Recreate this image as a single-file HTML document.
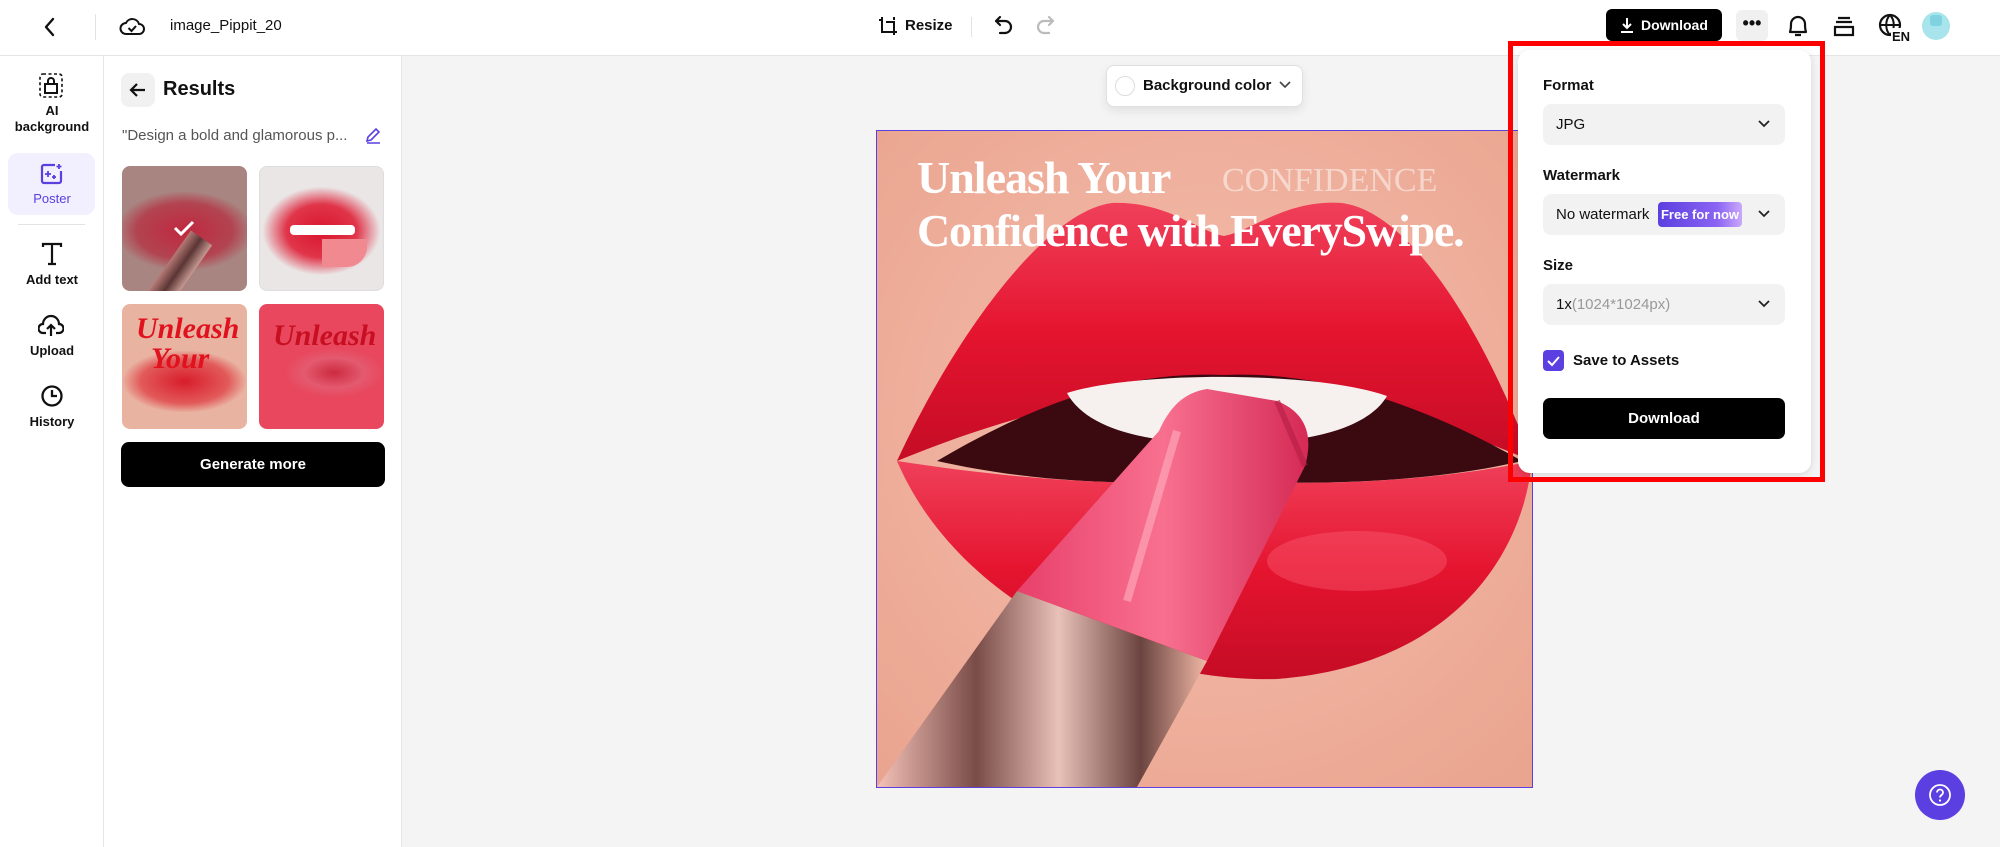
<!DOCTYPE html>
<html><head><meta charset="utf-8"><style>
*{box-sizing:border-box;margin:0;padding:0}
body{width:2000px;height:847px;overflow:hidden;background:#f4f4f4;font-family:"Liberation Sans",sans-serif;color:#111;position:relative}
.abs{position:absolute}
.top{left:0;top:0;width:2000px;height:56px;background:#fff;border-bottom:1px solid #e6e6e6}
.side{left:0;top:56px;width:104px;height:791px;background:#fff;border-right:1px solid #e6e6e6}
.panel{left:104px;top:56px;width:298px;height:791px;background:#fff;border-right:1px solid #e6e6e6}
.lbl{font-size:13px;font-weight:bold;text-align:center;width:104px;left:0;line-height:16px}
.thumb{border-radius:8px;overflow:hidden;width:125px;height:125px}
.field{left:1543px;width:242px;height:41px;background:#f2f2f2;border-radius:8px;font-size:15px;line-height:41px;padding-left:13px}
.flab{left:1543px;font-size:15px;font-weight:bold}
.chev{position:absolute;right:14px;top:14px}
</style></head><body>
<div class="abs top"></div>
<svg class="abs" style="left:40px;top:16px" width="20" height="22" viewBox="0 0 20 22"><path d="M13 3 L6 11 L13 19" fill="none" stroke="#111" stroke-width="2.4" stroke-linecap="round" stroke-linejoin="round"/></svg>
<div class="abs" style="left:95px;top:14px;width:1px;height:26px;background:#e3e3e3"></div>
<svg class="abs" style="left:119px;top:15px" width="26" height="22" viewBox="0 0 26 22"><path d="M7 19 H20 A5 5 0 0 0 20 9 A7 7 0 0 0 7 8 A5.5 5.5 0 0 0 7 19Z" fill="none" stroke="#111" stroke-width="2"/><path d="M9.5 13 L12.5 16 L17 11" fill="none" stroke="#111" stroke-width="2"/></svg>
<div class="abs" style="left:170px;top:17px;font-size:15px">image_Pippit_20</div>
<svg class="abs" style="left:877px;top:15px" width="22" height="22" viewBox="0 0 22 22"><path d="M5 2v3H2M5 5v12h12M17 20v-3h3M17 17V7H9" fill="none" stroke="#111" stroke-width="2"/><path d="M17 5V2" stroke="#111" stroke-width="2"/></svg>
<div class="abs" style="left:905px;top:17px;font-size:15px;font-weight:bold">Resize</div>
<div class="abs" style="left:971px;top:17px;width:1px;height:20px;background:#e3e3e3"></div>
<svg class="abs" style="left:993px;top:14px" width="22" height="24" viewBox="0 0 22 24"><path d="M7 3 L3 7 L7 11 M3 7 H12 A6 6 0 0 1 12 19 H7" fill="none" stroke="#111" stroke-width="2.2" stroke-linecap="round" stroke-linejoin="round"/></svg>
<svg class="abs" style="left:1034px;top:14px" width="22" height="24" viewBox="0 0 22 24"><path d="M15 3 L19 7 L15 11 M19 7 H10 A6 6 0 0 0 10 19 H15" fill="none" stroke="#bbb" stroke-width="2.2" stroke-linecap="round" stroke-linejoin="round"/></svg>
<div class="abs" style="left:1606px;top:9px;width:116px;height:32px;background:#000;border-radius:6px;color:#fff;font-size:14px;font-weight:bold;line-height:32px;padding-left:35px">Download</div>
<svg class="abs" style="left:1619px;top:16px" width="16" height="18" viewBox="0 0 16 18"><path d="M8 2v10M4 8l4 4 4-4M2 16h12" fill="none" stroke="#fff" stroke-width="2"/></svg>
<div class="abs" style="left:1736px;top:10px;width:32px;height:31px;background:#f0f0f0;border-radius:6px;font-size:18px;font-weight:bold;text-align:center;line-height:26px">•••</div>
<svg class="abs" style="left:1786px;top:13px" width="24" height="26" viewBox="0 0 24 26"><path d="M4 19 C5 16 5 14 5 11 A7 7 0 0 1 19 11 C19 14 19 16 20 19Z M9 22 H15" fill="none" stroke="#111" stroke-width="2.2" stroke-linejoin="round"/></svg>
<svg class="abs" style="left:1832px;top:14px" width="24" height="24" viewBox="0 0 24 24"><path d="M6 4H18M4 8H20M3 13H21V21H3Z" fill="none" stroke="#111" stroke-width="2.2"/></svg>
<svg class="abs" style="left:1877px;top:12px" width="34" height="30" viewBox="0 0 34 30"><circle cx="13" cy="13" r="10" fill="none" stroke="#111" stroke-width="2.2"/><path d="M3 13H23M13 3C8 8 8 18 13 23M13 3C18 8 18 18 13 23" fill="none" stroke="#111" stroke-width="2"/><rect x="14" y="16" width="20" height="14" fill="#fff"/><text x="15" y="29" font-family="Liberation Sans" font-weight="bold" font-size="13" fill="#111">EN</text></svg>
<div class="abs" style="left:1922px;top:12px;width:28px;height:28px;border-radius:50%;background:#a8e4ec"></div>
<div class="abs" style="left:1930px;top:15px;width:12px;height:11px;border-radius:3px;background:#7fd3e0"></div>

<div class="abs side"></div>
<svg class="abs" style="left:39px;top:73px" width="24" height="25" viewBox="0 0 24 25"><rect x="1" y="1" width="22" height="23" rx="3" fill="none" stroke="#111" stroke-width="1.6" stroke-dasharray="3 2.5"/><path d="M6 20V11H18V20ZM9 11V8A3 3 0 0 1 15 8V11" fill="none" stroke="#111" stroke-width="2"/></svg>
<div class="abs lbl" style="top:103px">AI<br>background</div>
<div class="abs" style="left:8px;top:153px;width:87px;height:62px;border-radius:10px;background:#f2f0ff"></div>
<svg class="abs" style="left:40px;top:163px" width="23" height="22" viewBox="0 0 23 22"><path d="M15 2H4A2 2 0 0 0 2 4V18A2 2 0 0 0 4 20H19A2 2 0 0 0 21 18V8" fill="none" stroke="#5b3fe0" stroke-width="2.2"/><path d="M8 8v6M5 11h6M14 12v4M12 14h4M19 1v5M16.5 3.5h5" stroke="#5b3fe0" stroke-width="1.8"/></svg>
<div class="abs lbl" style="top:191px;color:#5b3fe0;font-weight:normal">Poster</div>
<div class="abs" style="left:18px;top:224px;width:67px;height:1px;background:#e3e3e3"></div>
<svg class="abs" style="left:40px;top:242px" width="24" height="24" viewBox="0 0 24 24"><path d="M3 5V2H21V5M12 2V22M8 22H16" fill="none" stroke="#111" stroke-width="2.2"/></svg>
<div class="abs lbl" style="top:272px">Add text</div>
<svg class="abs" style="left:38px;top:314px" width="26" height="24" viewBox="0 0 26 24"><path d="M8 19H5A4.5 4.5 0 0 1 5 10A8 8 0 0 1 21 10A4.5 4.5 0 0 1 21 19H18M13 22V12M9 15L13 11L17 15" fill="none" stroke="#111" stroke-width="2.2"/></svg>
<div class="abs lbl" style="top:343px">Upload</div>
<svg class="abs" style="left:40px;top:384px" width="24" height="24" viewBox="0 0 24 24"><circle cx="12" cy="12" r="9.5" fill="none" stroke="#111" stroke-width="2.3"/><path d="M12 6V12H17" fill="none" stroke="#111" stroke-width="2.3"/></svg>
<div class="abs lbl" style="top:414px">History</div>

<div class="abs panel"></div>
<div class="abs" style="left:121px;top:73px;width:34px;height:34px;border-radius:8px;background:#f1f1f1"></div>
<svg class="abs" style="left:128px;top:80px" width="20" height="20" viewBox="0 0 20 20"><path d="M17 10H4M9 4L3 10L9 16" fill="none" stroke="#111" stroke-width="2.2"/></svg>
<div class="abs" style="left:163px;top:78px;font-size:20px;font-weight:bold">Results</div>
<div class="abs" style="left:122px;top:127px;font-size:15px;color:#555">"Design a bold and glamorous p...</div>
<svg class="abs" style="left:364px;top:127px" width="18" height="18" viewBox="0 0 18 18"><path d="M3 14L4 10L12 2L15 5L7 13ZM3 16H16" fill="none" stroke="#5b3fe0" stroke-width="1.6"/></svg>
<div class="abs thumb" style="left:122px;top:166px;background:radial-gradient(ellipse 55% 32% at 50% 52%,#c0283f 0,#b24451 70%,#a98581 100%)">
<div class="abs" style="left:45px;top:65px;width:26px;height:75px;background:linear-gradient(90deg,#b77a76,#5a3534,#c79a92);transform:rotate(35deg)"></div>
<svg class="abs" style="left:50px;top:52px" width="24" height="20"><path d="M3 10L9 16L21 4" fill="none" stroke="#fff" stroke-width="3"/></svg></div>
<div class="abs thumb" style="left:259px;top:166px;border:1px solid #ddd;background:radial-gradient(ellipse 48% 36% at 50% 52%,#d9152c 0,#e0354a 60%,#eae6e6 100%)"><div class="abs" style="left:30px;top:58px;width:65px;height:10px;background:#fff;border-radius:4px"></div><div class="abs" style="left:62px;top:72px;width:45px;height:28px;background:#f08a90;border-radius:0 0 20px 0"></div></div>
<div class="abs thumb" style="left:122px;top:304px;background:radial-gradient(ellipse 50% 25% at 50% 62%,#d81d2c 0,#e25a5a 70%,#e9b3a2 100%)"><div class="abs" style="left:14px;top:10px;font:italic bold 30px 'Liberation Serif',serif;color:#e0121e;line-height:30px">Unleash<br>&nbsp;&nbsp;Your</div></div>
<div class="abs thumb" style="left:259px;top:304px;background:radial-gradient(ellipse 40% 20% at 60% 55%,#cc2a40 0,#e45a6e 60%,#e8475e 100%)"><div class="abs" style="left:14px;top:15px;font:italic bold 30px 'Liberation Serif',serif;color:#c80f22">Unleash</div></div>
<div class="abs" style="left:121px;top:442px;width:264px;height:45px;border-radius:8px;background:#000;color:#fff;font-size:15px;font-weight:bold;text-align:center;line-height:45px">Generate more</div>

<div class="abs" style="left:1106px;top:65px;width:197px;height:42px;background:#fff;border:1px solid #e0e0e0;border-radius:8px;box-shadow:0 4px 10px rgba(0,0,0,.08)"></div>
<div class="abs" style="left:1115px;top:76px;width:20px;height:20px;border-radius:50%;border:1px solid #ddd"></div>
<div class="abs" style="left:1143px;top:77px;font-size:15px;font-weight:bold">Background color</div>
<svg class="abs" style="left:1278px;top:80px" width="14" height="10"><path d="M2 2L7 7L12 2" fill="none" stroke="#444" stroke-width="1.6"/></svg>

<div class="abs" style="left:876px;top:130px;width:657px;height:658px;border:1.5px solid #5b3fe0;overflow:hidden">
<svg width="655" height="656" viewBox="0 0 655 656" style="display:block">
<defs>
<radialGradient id="sk" cx="50%" cy="45%" r="70%"><stop offset="0" stop-color="#f5bfae"/><stop offset="1" stop-color="#eaa590"/></radialGradient>
<linearGradient id="lip" x1="0" y1="0" x2="0" y2="1"><stop offset="0" stop-color="#f0405a"/><stop offset="0.5" stop-color="#e5142f"/><stop offset="1" stop-color="#c50c25"/></linearGradient>
<linearGradient id="bul" x1="0" y1="0" x2="1" y2="0"><stop offset="0" stop-color="#e8406a"/><stop offset="0.5" stop-color="#f8708f"/><stop offset="1" stop-color="#d52a55"/></linearGradient>
<linearGradient id="tube" x1="0" y1="0" x2="1" y2="0"><stop offset="0" stop-color="#f4c2b8"/><stop offset="0.3" stop-color="#7a4c48"/><stop offset="0.55" stop-color="#e8c1b8"/><stop offset="0.8" stop-color="#6b4440"/><stop offset="1" stop-color="#f0b8a6"/></linearGradient>
</defs>
<rect width="655" height="656" fill="url(#sk)"/>
<path d="M20 330 C80 200 170 80 235 72 C290 70 320 100 347 105 C375 100 410 68 465 72 C540 82 615 220 655 330 C560 290 450 255 347 262 C240 255 130 285 20 330Z" fill="url(#lip)"/>
<path d="M60 330 C170 265 260 240 347 244 C440 240 540 270 645 330 C560 350 450 355 347 350 C240 355 150 350 60 330Z" fill="#3a0a10"/>
<path d="M190 262 C260 240 440 240 510 265 C490 300 420 315 350 310 C280 315 210 300 190 262Z" fill="#f6f0ee"/>
<path d="M20 330 C150 350 250 355 347 350 C450 355 560 350 655 330 C645 430 570 535 400 548 C250 552 80 470 20 330Z" fill="url(#lip)"/>
<ellipse cx="480" cy="430" rx="90" ry="30" fill="#ff6a80" opacity=".35"/>
<path d="M0 656 L140 460 L330 530 L260 656Z" fill="url(#tube)"/>
<path d="M140 460 L330 530 L428 335 C438 300 425 280 400 270 L330 258 C305 262 292 278 282 300Z" fill="url(#bul)"/>
<path d="M300 300 L250 470" stroke="#ffb0c0" stroke-width="8" opacity=".6"/>
<path d="M428 335 L400 270" stroke="#b51d45" stroke-width="6" opacity=".6"/>
<text x="40" y="62" font-family="Liberation Serif,serif" font-weight="bold" font-size="46" letter-spacing="-1" fill="#fff">Unleash Your</text>
<text x="345" y="60" font-family="Liberation Serif,serif" font-size="34" fill="#fff" opacity=".5">CONFIDENCE</text>
<text x="40" y="115" font-family="Liberation Serif,serif" font-weight="bold" font-size="46" letter-spacing="-1.2" fill="#fff">Confidence with EverySwipe.</text>
</svg></div>

<div class="abs" style="left:1508px;top:41px;width:317px;height:441px;border:5px solid #f00"></div>
<div class="abs" style="left:1518px;top:50px;width:293px;height:423px;background:#fff;border-radius:12px;box-shadow:0 2px 8px rgba(0,0,0,.12)"></div>
<div class="abs flab" style="top:77px">Format</div>
<div class="abs field" style="top:104px">JPG<svg class="chev" width="14" height="12"><path d="M2 3L7 8L12 3" fill="none" stroke="#222" stroke-width="1.8"/></svg></div>
<div class="abs flab" style="top:167px">Watermark</div>
<div class="abs field" style="top:194px">No watermark<svg class="chev" width="14" height="12"><path d="M2 3L7 8L12 3" fill="none" stroke="#222" stroke-width="1.8"/></svg></div>
<div class="abs" style="left:1658px;top:202px;width:84px;height:25px;border-radius:4px;background:linear-gradient(90deg,#5b3fe0,#8a63f2 70%,#c9a8fb);color:#fff;font-size:13px;font-weight:bold;line-height:25px;text-align:center">Free for now</div>
<div class="abs flab" style="top:257px">Size</div>
<div class="abs field" style="top:284px">1x<span style="color:#999">(1024*1024px)</span><svg class="chev" width="14" height="12"><path d="M2 3L7 8L12 3" fill="none" stroke="#222" stroke-width="1.8"/></svg></div>
<div class="abs" style="left:1543px;top:350px;width:21px;height:21px;border-radius:4px;background:#5b3fe0"></div>
<svg class="abs" style="left:1546px;top:353px" width="15" height="15"><path d="M2 8L6 12L13 4" fill="none" stroke="#fff" stroke-width="2"/></svg>
<div class="abs" style="left:1573px;top:352px;font-size:15px;font-weight:bold">Save to Assets</div>
<div class="abs" style="left:1543px;top:398px;width:242px;height:41px;background:#000;border-radius:7px;color:#fff;font-size:15px;font-weight:bold;line-height:41px;text-align:center">Download</div>

<div class="abs" style="left:1915px;top:770px;width:50px;height:50px;border-radius:50%;background:#5b3fe0"></div>
<svg class="abs" style="left:1928px;top:783px" width="24" height="24" viewBox="0 0 24 24"><circle cx="12" cy="12" r="10" fill="none" stroke="#fff" stroke-width="1.8"/><path d="M9 9.5A3 3 0 0 1 15 9.5C15 12 12 12 12 14.5" fill="none" stroke="#fff" stroke-width="1.8"/><circle cx="12" cy="17.5" r="1.1" fill="#fff"/></svg>
</body></html>
